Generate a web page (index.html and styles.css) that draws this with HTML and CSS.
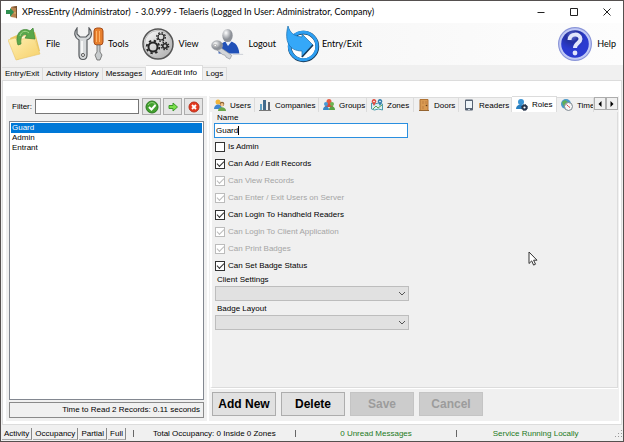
FILE: index.html
```html
<!DOCTYPE html>
<html lang="en">
<head>
<meta charset="utf-8">
<title>XPressEntry</title>
<link rel="stylesheet" href="styles.css">
</head>
<body>
<div class="window">
  <header class="titlebar">
    <svg class="app-icon" viewBox="0 0 13 13"><path d="M5 1l6-1v12l-6-1z" fill="#b98550"/><path d="M5 1l6-1v12l-1 .5V2z" fill="#76502f"/><path d="M0 4h4V2l4 4-4 5V8H0z" fill="#2f8f50"/><circle cx="9" cy="7" r=".7" fill="#f2d27a"/></svg>
    <h1 class="title">XPressEntry (Administrator)&nbsp; - 3.0.999 - Telaeris (Logged In User: Administrator, Company)</h1>
    <div class="caption">
      <button aria-label="Minimize"><svg viewBox="0 0 8 8"><path d="M.5 4.5h7"/></svg></button>
      <button aria-label="Maximize"><svg viewBox="0 0 8 8"><path d="M.5.5h7v7h-7z"/></svg></button>
      <button aria-label="Close"><svg viewBox="0 0 8 8"><path d="M.5.5l7 7m0-7l-7 7"/></svg></button>
    </div>
  </header>

  <nav class="toolbar">
    <button class="tool file">
      <svg viewBox="0 0 34 34"><defs><linearGradient id="fold" x1="0" y1="0" x2="1" y2="1"><stop offset="0" stop-color="#fff0b4"/><stop offset="1" stop-color="#f6d069"/></linearGradient></defs><path d="M2 11l7-3 2 2 16-5 5 19-23 9z" fill="#ecc763"/><path d="M4 13l22-7 4 17-22 8z" fill="#fff6cf"/><path d="M0 13l7-2 2 2 17-3 6 17-24 6z" fill="url(#fold)" stroke="#e8c468" stroke-width=".6"/><path d="M10 18C6 7 14-1 22 4l3-3 2 11-10-1 2-3c-4-2-7 2-6 9z" fill="#5aa84a" stroke="#3d8535" stroke-width=".7"/><path d="M12 9c1-5 6-6 9-3" fill="none" stroke="#a2d78a"/></svg>
      <span>File</span></button>
    <button class="tool tools">
      <svg viewBox="0 0 30 34"><path d="M3 1C-1 6 1 11 5 13v15c0 6 8 6 8 0V13c5-2 6-8 2-12v6l-3 3H6L3 7z" fill="#d6d9db" stroke="#565a5e" stroke-width="1.2"/><path d="M8 14v12" stroke="#fff" stroke-width="1.5"/><circle cx="9" cy="28" r="1.5" fill="#fff" stroke="#555"/><rect x="20" y="1" width="9" height="17" rx="3" fill="#e7802e" stroke="#a84c19"/><path d="M22.500 4v11m3-11v11" stroke="#ffb36a"/><path d="M23 18h3v7l2 3-2 5h-3l-2-5 2-3z" fill="#c7cbcd" stroke="#666" stroke-width=".8"/></svg>
      <span>Tools</span></button>
    <button class="tool view">
      <svg viewBox="0 0 34 34"><defs><linearGradient id="metal" x1="0" y1="0" x2="1" y2="1"><stop offset="0" stop-color="#fff"/><stop offset="1" stop-color="#a8a8a8"/></linearGradient></defs><circle cx="17" cy="17" r="15" fill="url(#metal)" stroke="#555" stroke-width="1.5"/><circle cx="17" cy="17" r="13.500" fill="none" stroke="#bbb"/><g fill="none" stroke="#252525"><circle cx="12" cy="20" r="4.500" stroke-width="2"/><circle cx="12" cy="20" r="6.300" stroke-width="1.800" stroke-dasharray="2.400 2.548"/><circle cx="20" cy="10" r="3" stroke-width="1.200"/><circle cx="20" cy="10" r="4.300" stroke-width="1.300" stroke-dasharray="1.700 1.677"/><circle cx="24" cy="19" r="2.200" stroke-width="1.600"/><circle cx="24" cy="19" r="3.700" stroke-width="1.300" stroke-dasharray="1.500 1.406"/></g></svg>
      <span>View</span></button>
    <button class="tool logout">
      <svg viewBox="0 0 36 34"><defs><radialGradient id="head" cx=".35" cy=".3"><stop offset="0" stop-color="#fff"/><stop offset="1" stop-color="#8d9198"/></radialGradient></defs><path d="M8 27c0-9 4-13 10-13s11 3 12 13z" fill="#2151b8"/><path d="M15 14l3 5 4-5z" fill="#e9eef8"/><ellipse cx="17.500" cy="8" rx="5.500" ry="7" fill="url(#head)"/><path d="M9 20l13 9-2 4-4-2-1-2-3-1-6-5z" fill="#d2d5d9" stroke="#8b9096" stroke-width=".7"/><ellipse cx="6.500" cy="18.500" rx="5.800" ry="5" fill="url(#head)" stroke="#9a9da3" stroke-width=".6"/><circle cx="4.500" cy="18.500" r="1.300" fill="#fff" stroke="#777" stroke-width=".5"/><path d="M23 28h11" stroke="#c9cdd4"/></svg>
      <span>Logout</span></button>
    <button class="tool entry">
      <svg viewBox="0 0 34 38"><circle cx="17.500" cy="21.500" r="13.800" fill="#fff" stroke="#173b5a" stroke-width="3.800"/><circle cx="17.200" cy="21" r="13.800" fill="none" stroke="#2e9ff2" stroke-width="3"/><path d="M2 1c2 7 6 10 14 11V9l11 11-11 12v-6C3 26-2 16 2 1z" fill="#35a8f8" stroke="#176cab" stroke-width=".7"/><path d="M27 20L16 32" stroke="#173b5a" stroke-width="1.500"/></svg>
      <span>Entry/Exit</span></button>
    <button class="tool help">
      <svg viewBox="0 0 36 36"><defs><radialGradient id="orb" cx=".4" cy=".2"><stop offset="0" stop-color="#6674d0"/><stop offset=".45" stop-color="#2430a0"/><stop offset="1" stop-color="#2b3bd0"/></radialGradient></defs><circle cx="18" cy="18" r="17" fill="#8a95d8"/><circle cx="18" cy="18" r="15.800" fill="#c2caf6"/><circle cx="18" cy="18" r="13.800" fill="url(#orb)"/><path d="M12.500 14c0-7 11-7 11-1 0 4-5.500 4-5.500 9" fill="none" stroke="#e2e6fb" stroke-width="4"/><circle cx="18" cy="27" r="2.400" fill="#e2e6fb"/></svg>
      <span>Help</span></button>
  </nav>

  <nav class="main-tabs">
    <button>Entry/Exit</button><button>Activity History</button><button>Messages</button><button class="on">Add/Edit Info</button><button>Logs</button>
  </nav>

  <main class="page">
    <section class="side">
      <div class="filter">
        <label for="filter">Filter:</label>
        <input id="filter" type="text">
        <button aria-label="Apply filter"><svg viewBox="0 0 14 14"><circle cx="7" cy="7" r="6" fill="#43a02f" stroke="#2c7a20"/><path d="M3 5a4.500 4.500 0 0 1 8 0" fill="none" stroke="#8fd27a"/><path d="M4 7l2.500 2.500L10.500 5" fill="none" stroke="#fff" stroke-width="2"/></svg></button>
        <button aria-label="Next"><svg viewBox="0 0 14 14"><path d="M3 5.500h4V3l4.500 4L7 11V8.500H3z" fill="#7be04b" stroke="#3d9a2b"/></svg></button>
        <button aria-label="Clear filter"><svg viewBox="0 0 14 14"><circle cx="7" cy="7" r="5" fill="#e3391f" stroke="#b8301c"/><path d="M5 5l4 4m0-4L5 9" stroke="#fff" stroke-width="1.800"/></svg></button>
      </div>
      <ul class="list"><li class="on">Guard</li><li>Admin</li><li>Entrant</li></ul>
      <p class="timing">Time to Read 2 Records: 0.11 seconds</p>
    </section>

    <section class="detail">
      <nav class="sub-tabs">
        <button class="t-users"><svg viewBox="0 0 12 12"><circle cx="4" cy="3" r="2.500" fill="#f0b53c"/><path d="M0 10c0-6 8-6 8 0z" fill="#3f86d0"/><circle cx="8" cy="5" r="2.300" fill="#8b6132"/><circle cx="8" cy="5.700" r="1.600" fill="#f4c48a"/><path d="M4 12c0-5 8-5 8 0z" fill="#6aa84a"/></svg>Users</button>
        <button class="t-companies"><svg viewBox="0 0 12 12"><path d="M1 5h2v6H1z" fill="#5f9fc5"/><path d="M4 1h3v10H4z" fill="#416a8d"/><path d="M9 3h2v8H9z" fill="#5c6571"/><path d="M0 11.500h12" stroke="#777"/></svg>Companies</button>
        <button class="t-groups"><svg viewBox="0 0 12 12"><circle cx="6" cy="2.500" r="2.500" fill="#e45b46"/><path d="M2 8c0-5 8-5 8 0z" fill="#d94a3b"/><circle cx="3" cy="5" r="2" fill="#4799d6"/><path d="M0 11c0-5 6-5 6 0z" fill="#3688c8"/><circle cx="9" cy="5" r="2" fill="#6cb34e"/><path d="M6 11c0-5 6-5 6 0z" fill="#58a344"/></svg>Groups</button>
        <button class="t-zones"><svg viewBox="0 0 12 12"><path d="M.5 4l3 1 4-1 4 1v6l-4-1-4 1-3-1z" fill="#d9edf4" stroke="#4b9cac"/><path d="M2 10l3-3 2 2 4-3" stroke="#60a54c" fill="none"/><path d="M3 7L.8 3a2.300 2.300 0 1 1 4.400 0z" fill="#df4f43"/><path d="M9 7L6.800 3a2.300 2.300 0 1 1 4.400 0z" fill="#367fae"/><circle cx="3" cy="2.500" r=".8" fill="#fff"/><circle cx="9" cy="2.500" r=".8" fill="#fff"/></svg>Zones</button>
        <button class="t-doors"><svg viewBox="0 0 12 12"><path d="M2 .5h8v11H2z" fill="#d99a51" stroke="#b07334"/><path d="M4 2h2v3H4zm3 0h2v3H7zM4 7h2v3H4z" fill="#cc8c48"/><circle cx="8.500" cy="6.500" r=".8" fill="#674019"/><path d="M1 11.500h10" stroke="#94632f"/></svg>Doors</button>
        <button class="t-readers"><svg viewBox="0 0 12 12"><rect x="2" y=".5" width="8" height="11" rx="1" fill="#566273"/><path d="M3 2h6v7H3z" fill="#eef4f8"/><path d="M5 10.500h2" stroke="#c9d4df"/></svg>Readers</button>
        <button class="t-roles on"><svg viewBox="0 0 12 12"><circle cx="5" cy="3" r="3" fill="#3a93d3"/><path d="M0 10c0-6 9-6 9 0z" fill="#287fc0"/><circle cx="8.500" cy="8.500" r="2" fill="#fff" stroke="#26354c" stroke-width="1.800"/><circle cx="8.500" cy="8.500" r="3" fill="none" stroke="#26354c" stroke-dasharray="1.200 1.156"/></svg>Roles</button>
        <button class="t-time"><svg viewBox="0 0 12 12"><circle cx="5" cy="5" r="5" fill="#4b99ca"/><path d="M1 3l3-2 3 2-2 2-1 3-2-2z" fill="#5faf58"/><circle cx="7.500" cy="7.500" r="4" fill="#f5f7f7" stroke="#7d8790"/><path d="M5.500 5.500l2 2 1.500 1" stroke="#d44" fill="none"/></svg>Time</button>
        <span class="spin"><button aria-label="Scroll left"><svg viewBox="0 0 4 6"><path d="M3.500 0v6L.5 3z"/></svg></button><button aria-label="Scroll right"><svg viewBox="0 0 4 6"><path d="M.5 0v6l3-3z"/></svg></button></span>
      </nav>
      <form class="form">
        <label class="cap" for="name">Name</label>
        <div class="entry-box"><input class="name" id="name" type="text" value="Guard"><span class="caret"></span></div>
        <div class="checks">
          <label><input type="checkbox">Is Admin</label>
          <label><input type="checkbox" checked>Can Add / Edit Records</label>
          <label class="off"><input type="checkbox" checked disabled>Can View Records</label>
          <label class="off"><input type="checkbox" checked disabled>Can Enter / Exit Users on Server</label>
          <label><input type="checkbox" checked>Can Login To Handheld Readers</label>
          <label class="off"><input type="checkbox" checked disabled>Can Login To Client Application</label>
          <label class="off"><input type="checkbox" checked disabled>Can Print Badges</label>
          <label><input type="checkbox" checked>Can Set Badge Status</label>
        </div>
        <label class="cap" for="client">Client Settings</label>
        <div class="drop"><select id="client"></select><svg viewBox="0 0 8 5"><path d="M1 1l3 3 3-3"/></svg></div>
        <label class="cap" for="badge">Badge Layout</label>
        <div class="drop"><select id="badge"></select><svg viewBox="0 0 8 5"><path d="M1 1l3 3 3-3"/></svg></div>
      </form>
      <div class="actions"><button>Add New</button><button>Delete</button><button disabled>Save</button><button disabled>Cancel</button></div>
    </section>
  </main>

  <footer class="status">
    <div class="views"><button>Activity</button><button>Occupancy</button><button>Partial</button><button>Full</button></div>
    <i></i><span class="total">Total Occupancy: 0 Inside 0 Zones</span>
    <i></i><span class="unread">0 Unread Messages</span>
    <i></i><span class="service">Service Running Locally</span>
    <svg class="grip" viewBox="0 0 9 9"><path d="M7 1h1v1H7zM4 4h1v1H4zm3 0h1v1H7zM1 7h1v1H1zm3 0h1v1H4zm3 0h1v1H7z"/></svg>
  </footer>
  <svg class="pointer" viewBox="0 0 10 15"><path d="M1 1v11.500l2.700-2.600 1.900 4.200 1.900-.9-1.900-4H9z"/></svg>
</div>
</body>
</html>
```
FILE: styles.css
```css
* { box-sizing: border-box; }
body { margin: 0; background: #4a4a4a; color: #000; font: 8px/11px "Liberation Sans", Arial, sans-serif; }
button, input, select { font: inherit; color: inherit; margin: 0; border-radius: 0; }
button { padding: 0; white-space: nowrap; }
svg { display: block; flex: none; }
.window { position: relative; display: flex; flex-direction: column; min-height: 100vh; border: 1px solid #55504f; background: #f0f0f0; }

.titlebar { display: flex; align-items: center; height: 22px; padding-left: 5px; background: #fff; }
.app-icon { width: 13px; height: 13px; }
.title { flex: 1; margin: 0 0 0 3px; font: 9px/14px Lato, "Noto Sans", sans-serif; white-space: nowrap; }
.caption { display: flex; }
.caption button { display: grid; place-items: center; width: 33px; height: 21px; border: 0; background: none; }
.caption svg { width: 8px; height: 8px; fill: none; stroke: #222; }

.toolbar { display: flex; align-items: center; height: 42px; padding: 0 7px; background: linear-gradient(90deg, #f1f1f1, #fdfdfd); }
.tool { display: flex; align-items: center; gap: 4px; border: 0; background: none; font: 9px/14px Lato, "Noto Sans", sans-serif; }
.tool svg { width: 34px; height: 34px; }
.tools { margin-left: 14px; }
.tools svg { width: 30px; }
.view { margin-left: 12px; }
.logout { margin-left: 12px; }
.entry { margin-left: 10px; }
.entry svg { height: 38px; }
.entry { gap: 2px; }
.help { margin-left: auto; }
.help svg { width: 36px; height: 36px; }

.main-tabs { display: flex; align-items: flex-end; height: 15px; padding-left: 1px; }
.main-tabs button { height: 13px; padding: 0 3px; border: 1px solid #dcdcdc; border-width: 1px 1px 0 0; background: #f0f0f0; line-height: 12px; }
.main-tabs .on { height: 15px; padding: 0 5px; background: #fff; }

.page { flex: 1; display: flex; gap: 2px; margin: 0 1px 1px; padding: 15px 2px 3px 3px; border: 1px solid #dcdcdc; background: #fff; }
.side { display: flex; flex-direction: column; width: 201px; padding: 2px 3px 3px; background: #f0f0f0; }
.filter { display: flex; align-items: center; gap: 2px; height: 17px; margin-bottom: 6px; padding: 0 1px 0 3px; }
.filter label { width: 21px; white-space: nowrap; }
.filter input { flex: 1; min-width: 0; height: 15px; margin-right: 1px; padding: 0 2px; border: 1px solid #767676; background: #fff; }
.filter button { display: grid; place-items: center; width: 19px; height: 17px; border: 1px solid #adadad; background: #e5e5e5; }
.filter svg { width: 14px; height: 14px; }
.list { flex: 1; margin: 0; padding: 1px; border: 1px solid #828790; background: #fff; list-style: none; }
.list li { height: 10px; padding-left: 1px; line-height: 10px; }
.list .on { background: #0078d7; color: #fff; }
.timing { height: 16px; margin: 2px 0 0; padding: 0 3px; border: 1px solid #8a8a8a; line-height: 14px; text-align: right; }

.detail { flex: 1; display: flex; flex-direction: column; min-width: 0; padding: 0 1px 5px 1px; background: #f0f0f0; }
.sub-tabs { display: flex; align-items: flex-end; height: 16px; background: linear-gradient(#fff 1px, #f0f0f0 1px); }
.sub-tabs > button { display: flex; align-items: center; gap: 4px; height: 15px; padding: 0 0 0 4px; overflow: hidden; border: 1px solid #dcdcdc; border-width: 1px 1px 0 0; background: #f0f0f0; }
.sub-tabs > button svg { width: 12px; height: 12px; }
.sub-tabs > .on { height: 16px; background: #fff; }
.t-users { width: 45px; }
.t-companies { width: 64px; }
.t-groups { width: 48px; }
.t-zones { width: 47px; }
.t-doors { width: 45px; }
.t-readers { width: 53px; }
.t-roles { width: 45px; }
.t-time { flex: 1; min-width: 0; }
.spin { display: flex; margin-bottom: 2px; }
.spin button { display: grid; place-items: center; width: 12px; height: 13px; border: 1px solid #adadad; background: #f0f0f0; }
.spin svg { width: 4px; height: 6px; }

.form { flex: 1; padding: 0 2px; border: 1px solid #dcdcdc; border-top: 0; border-left: 2px solid #fff; box-shadow: 0 1px #fff; }
.cap { display: block; height: 11px; padding-left: 3px; }
.entry-box { position: relative; width: 194px; }
.name { display: block; width: 100%; height: 15px; padding: 0 1px; border: 1px solid #2a8fe0; background: #fff; outline: 0; }
.caret { position: absolute; left: 24px; top: 3px; width: 1px; height: 9px; background: #000; }
.checks { padding-left: 1px; }
.checks label { display: flex; align-items: center; gap: 3px; height: 17px; }
.checks .off { color: #a5a5a5; }
.checks input { position: relative; appearance: none; width: 10px; height: 10px; border: 1px solid #333; background: #fff; }
.checks input:checked::after { content: ""; display: block; width: 6px; height: 3px; margin: 1px; border: solid #333; border-width: 0 0 1px 1px; transform: rotate(-45deg); }
.checks input:disabled, .checks input:disabled::after { border-color: #bcbcbc; }
.drop { position: relative; width: 194px; margin: 1px 0 2px 1px; }
.drop select { display: block; appearance: none; width: 100%; height: 15px; border: 1px solid #bdbdbd; background: #e1e1e1; }
.drop svg { position: absolute; right: 3px; top: 5px; width: 8px; height: 5px; fill: none; stroke: #555; }

.actions { display: flex; gap: 5px; padding: 4px 0 0 2px; }
.actions button { width: 64px; height: 24px; border: 1px solid #adadad; background: #e1e1e1; font-size: 12px; font-weight: bold; color: #000; }
.actions button:disabled { border-color: #c4c4c4; background: #ccc; color: #9c9c9c; }

.status { display: flex; align-items: center; height: 15px; }
.views { display: flex; flex: none; width: 132px; padding-left: 1px; }
.views button { height: 12px; margin-right: 1px; padding: 0 2px; border: 0; border-right: 1px solid #888; border-bottom: 1px solid #aaa; background: none; line-height: 11px; }
.status i { width: 1px; height: 7px; background: #666; }
.status > span { flex: 1 1 160px; text-align: center; white-space: nowrap; }
.status > .service { flex-basis: 156px; }
.unread, .service { color: #1c7a1c; }
.grip { width: 9px; height: 9px; fill: #999; }
.pointer { position: absolute; left: 527px; top: 250px; width: 10px; height: 15px; fill: #fff; stroke: #333; }
```
